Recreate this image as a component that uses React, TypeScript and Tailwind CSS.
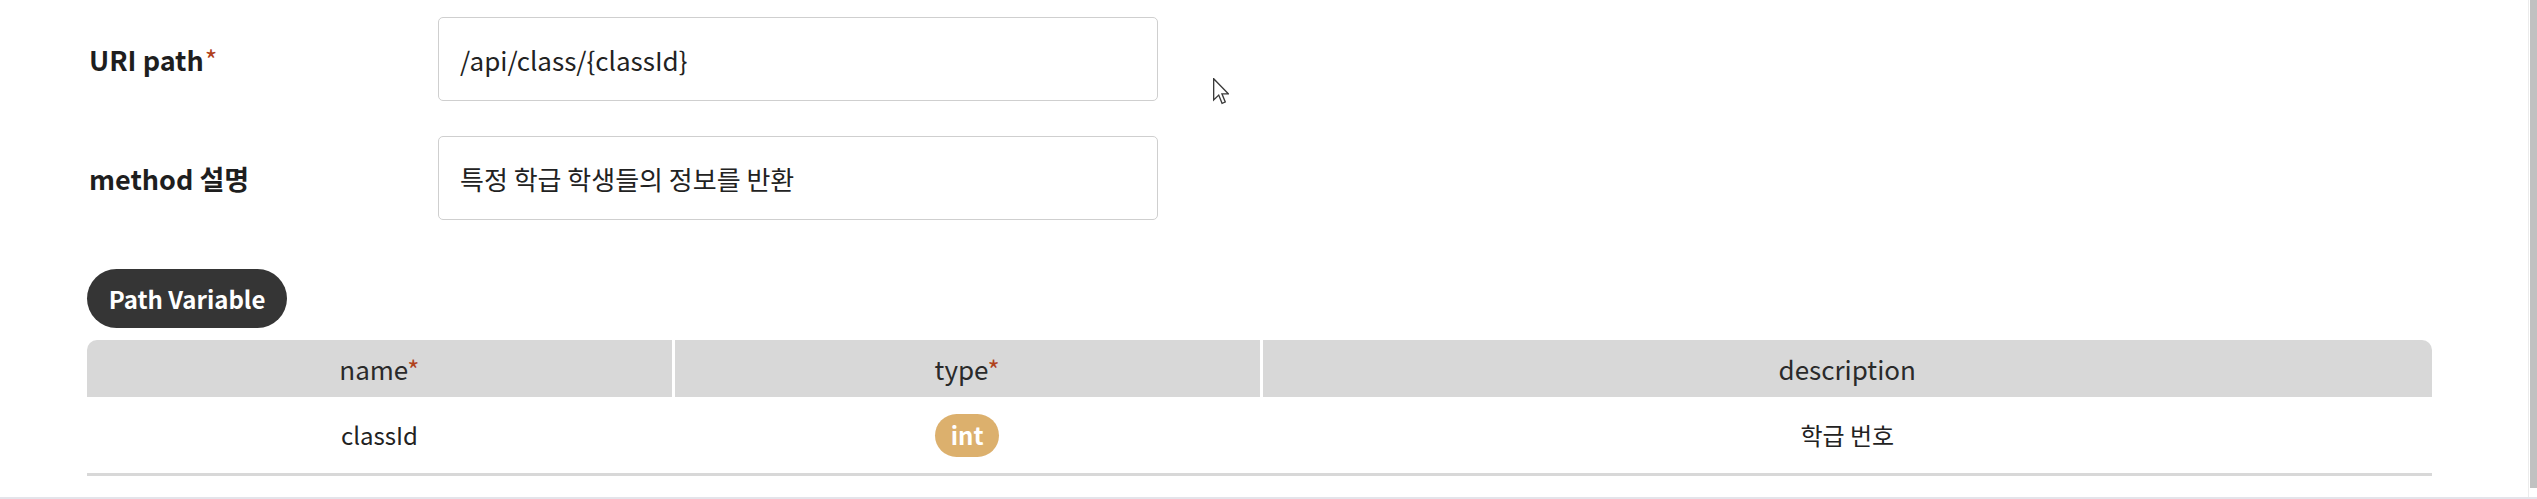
const font = { fontFamily: '"Noto Sans CJK KR", "Noto Sans", sans-serif' }

function Star({ className = "" }: { className?: string }) {
  return <span className={`text-[#b0411c] font-normal ${className}`}>*</span>
}

function FieldRow({ label, value, required }: { label: string; value: string; required?: boolean }) {
  return (
    <div className="flex items-center">
      <div className="w-[351px] pl-[2px] text-[27px] font-bold text-[#1e1e1e] leading-none">
        {label}
        {required && <Star className="ml-[1px]" />}
      </div>
      <div className="w-[720px] h-[84px] border border-[#cfcfcf] rounded-[5px] px-[21px] flex items-center text-[26px] text-[#222]">
        {value}
      </div>
    </div>
  )
}

function Cursor() {
  return (
    <svg className="absolute left-[1213px] top-[78px]" width="16" height="28" viewBox="0 0 12 21">
      <path
        d="M0.5 0.5 L0.5 16.5 L4.3 12.8 L6.8 19 L9.2 18 L6.7 11.9 L11.5 11.9 Z"
        fill="#fff"
        stroke="#3a3a3a"
        strokeWidth="1"
        strokeLinejoin="miter"
      />
    </svg>
  )
}

export default function App() {
  const cols = [
    { title: "name", required: true },
    { title: "type", required: true },
    { title: "description", required: false },
  ]

  return (
    <div className="relative flex h-[499px] bg-white border-b-2 border-[#e4e4ea]" style={font}>
      <main className="flex-1 pl-[87px] pr-[96px] pt-[17px]">
        <FieldRow label="URI path" value="/api/class/{classId}" required />
        <div className="mt-[35px]">
          <FieldRow label="method 설명" value="특정 학급 학생들의 정보를 반환" />
        </div>

        <div className="mt-[49px] inline-flex items-center justify-center h-[59px] w-[200px] rounded-full bg-[#353535] text-white text-[24px] font-semibold">
          Path Variable
        </div>

        <div className="mt-[12px]">
          <div className="grid grid-cols-[1fr_1fr_2fr] gap-x-[3px] bg-white rounded-t-[10px] overflow-hidden">
            {cols.map((c) => (
              <div key={c.title} className="h-[57px] bg-[#d8d8d8] flex items-center justify-center text-[26px] text-[#2a2a2a]">
                <span>
                  {c.title}
                  {c.required && <Star />}
                </span>
              </div>
            ))}
          </div>
          <div className="grid grid-cols-[1fr_1fr_2fr] gap-x-[3px] h-[79px] items-center border-b-[3px] border-[#d8d8d8] text-[24px] text-[#222]">
            <div className="text-center">classId</div>
            <div className="flex justify-center">
              <span className="h-[43px] w-[64px] rounded-full bg-[#dcb06d] text-white font-semibold text-[24px] flex items-center justify-center">
                int
              </span>
            </div>
            <div className="text-center">학급 번호</div>
          </div>
        </div>
      </main>

      <div className="w-[9px] border-l border-[#ececec] bg-white flex justify-end">
        <div className="w-[7px] h-[488px] bg-[#c1c1c1]" />
      </div>

      <Cursor />
    </div>
  )
}
